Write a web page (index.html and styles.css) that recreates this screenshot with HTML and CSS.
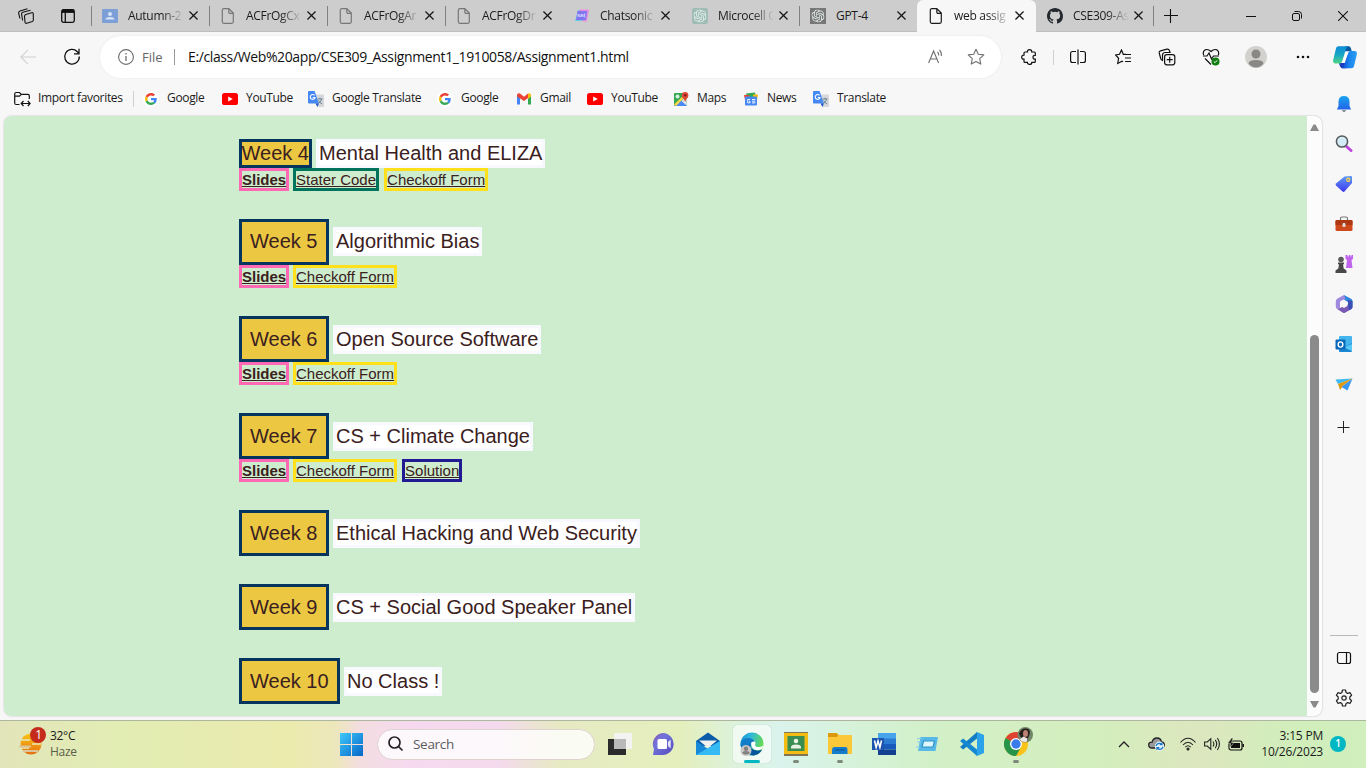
FILE: index.html
```html
<!DOCTYPE html>
<html lang="en">
<head>
<meta charset="utf-8">
<title>web assignment</title>
<link rel="stylesheet" href="styles.css">
</head>
<body>
<svg class="defs" width="0" height="0">
  <defs>
    <linearGradient id="blue" x2="1" y2="1"><stop stop-color="#3fc8fb"/><stop offset="1" stop-color="#0567c8"/></linearGradient>
    <linearGradient id="bell" x2="0" y2="1"><stop stop-color="#1aa4f0"/><stop offset="1" stop-color="#2463e6"/></linearGradient>
    <linearGradient id="tag" x2="0" y2="1"><stop stop-color="#5f9bf5"/><stop offset="1" stop-color="#4038ee"/></linearGradient>
    <linearGradient id="violet" x2="1" y2="1"><stop stop-color="#8e5bb4"/><stop offset=".35" stop-color="#7173db"/><stop offset="1" stop-color="#5449bb"/></linearGradient>
    <linearGradient id="sun" x2="0" y2="1"><stop stop-color="#f9c515"/><stop offset="1" stop-color="#e86f10"/></linearGradient>
    <linearGradient id="edge" x2="1" y2=".4"><stop stop-color="#158fd4"/><stop offset=".45" stop-color="#30b9d9"/><stop offset="1" stop-color="#67db52"/></linearGradient>
    <linearGradient id="cop1" x2="0" y2="1"><stop stop-color="#0e8bdc"/><stop offset=".5" stop-color="#19a6c4"/><stop offset="1" stop-color="#4fd684"/></linearGradient>
    <linearGradient id="cop2" x2="1" y2="0"><stop stop-color="#1546d0"/><stop offset=".5" stop-color="#1a86ee"/><stop offset="1" stop-color="#2d9df5"/></linearGradient>
  </defs>
  <symbol id="doc" viewBox="0 0 16 16"><path d="M3.800.7h5L13.300 5.100v8.700q0 1.500-1.500 1.500h-8q-1.500 0-1.500-1.500V2.200Q2.300.7 3.800.7M8.800.9v3.200q0 1.300 1.300 1.300h3" fill="none" stroke="currentColor" stroke-width="1.200"/></symbol>
  <symbol id="x" viewBox="0 0 8 8"><path d="M.4.4l7.200 7.200M7.600.4L.4 7.600" stroke="#161616" stroke-width="1.100"/></symbol>
  <symbol id="g" viewBox="0 0 48 48"><path fill="#EA4335" d="M24 9.500c3.540 0 6.710 1.220 9.210 3.600l6.850-6.850C35.900 2.380 30.470 0 24 0 14.620 0 6.510 5.380 2.560 13.220l7.980 6.190C12.430 13.720 17.740 9.500 24 9.500z"/><path fill="#4285F4" d="M46.980 24.550c0-1.570-.15-3.090-.38-4.550H24v9.020h12.940c-.58 2.960-2.260 5.480-4.780 7.180l7.730 6c4.510-4.180 7.090-10.360 7.090-17.650z"/><path fill="#FBBC05" d="M10.530 28.590c-.48-1.450-.76-2.990-.76-4.590s.27-3.140.76-4.590l-7.980-6.190C.92 16.460 0 20.120 0 24c0 3.880.92 7.540 2.560 10.780l7.970-6.190z"/><path fill="#34A853" d="M24 48c6.480 0 11.930-2.130 15.890-5.810l-7.730-6c-2.150 1.450-4.920 2.300-8.160 2.300-6.260 0-11.570-4.220-13.470-9.910l-7.980 6.190C6.510 42.620 14.620 48 24 48z"/></symbol>
  <symbol id="yt" viewBox="0 0 16 12"><rect width="16" height="12" rx="2.600" fill="#f00"/><path d="M6.200 3.400v5.200L10.800 6z" fill="#fff"/></symbol>
  <symbol id="tr" viewBox="0 0 16 16"><path d="M6 3.500h9q1 0 1 1V15q0 1-1 1H9z" fill="#d5d7da"/><path d="M9.500 8h5M12 6.800V8m1.800 0q-.8 3-4 4.800M10.500 9.500q1.500 2.500 3.700 3.500" fill="none" stroke="#5d7c8d" stroke-width=".9"/><path d="M1 0h5.600l4.200 12.500H1q-1 0-1-1V1q0-1 1-1z" fill="#4688f1"/><path d="M7.500 12.500h3.300L9.500 16z" fill="#1c56c9"/><path d="M6.500 4.400A2.400 2.400 0 1 0 7 6.500H4.800" fill="none" stroke="#fff" stroke-width="1.100"/></symbol>
  <symbol id="knot" viewBox="0 0 24 24"><path fill="#e4efec" d="M22.2819 9.8211a5.9847 5.9847 0 0 0-.5157-4.9108 6.0462 6.0462 0 0 0-6.5098-2.9A6.0651 6.0651 0 0 0 4.9807 4.1818a5.9847 5.9847 0 0 0-3.9977 2.9 6.0462 6.0462 0 0 0 .7427 7.0966 5.98 5.98 0 0 0 .511 4.9107 6.051 6.051 0 0 0 6.5146 2.9001A5.9847 5.9847 0 0 0 13.2599 24a6.0557 6.0557 0 0 0 5.7718-4.2058 5.9894 5.9894 0 0 0 3.9977-2.9001 6.0557 6.0557 0 0 0-.7475-7.0729zm-9.022 12.6081a4.4755 4.4755 0 0 1-2.8764-1.0408l.1419-.0804 4.7783-2.7582a.7948.7948 0 0 0 .3927-.6813v-6.7369l2.02 1.1686a.071.071 0 0 1 .038.052v5.5826a4.504 4.504 0 0 1-4.4945 4.4944zm-9.6607-4.1254a4.4708 4.4708 0 0 1-.5346-3.0137l.142.0852 4.783 2.7582a.7712.7712 0 0 0 .7806 0l5.8428-3.3685v2.3324a.0804.0804 0 0 1-.0332.0615L9.74 19.9502a4.4992 4.4992 0 0 1-6.1408-1.6464zM2.3408 7.8956a4.485 4.485 0 0 1 2.3655-1.9728V11.6a.7664.7664 0 0 0 .3879.6765l5.8144 3.3543-2.0201 1.1685a.0757.0757 0 0 1-.071 0l-4.8303-2.7865A4.504 4.504 0 0 1 2.3408 7.872zm16.5963 3.8558L13.1038 8.364 15.1192 7.2a.0757.0757 0 0 1 .071 0l4.8303 2.7913a4.4944 4.4944 0 0 1-.6765 8.1042v-5.6772a.79.79 0 0 0-.407-.667zm2.0107-3.0231l-.142-.0852-4.7735-2.7818a.7759.7759 0 0 0-.7854 0L9.409 9.2297V6.8974a.0662.0662 0 0 1 .0284-.0615l4.8303-2.7866a4.4992 4.4992 0 0 1 6.6802 4.66zM8.3065 12.863l-2.02-1.1638a.0804.0804 0 0 1-.038-.0567V6.0742a4.4992 4.4992 0 0 1 7.3757-3.4537l-.142.0805L8.704 5.459a.7948.7948 0 0 0-.3927.6813zm1.0976-2.3654l2.602-1.4998 2.6069 1.4998v2.9994l-2.5974 1.4997-2.6067-1.4997Z"/></symbol>
</svg>

<header class="tabs">
  <div class="tab-tools">
    <svg class="t1" width="16" height="16" viewBox="0 0 16 16" fill="#cdcdcd" stroke="#111" stroke-width="1.100"><path d="M9.500.8L2 3q-1.600.7-1.300 2.300l1.200 5.200"/><path d="M12.500 2.300L4.800 4.200q-1.500.6-1.200 2l1 6.300"/><path d="M7.700 6.600l6-1.900q1.600-.3 1.600 1.200v6q0 1.200-1 1.600l-5.500 1.800q-1.600.3-1.800-1.200l-.5-5.600q0-1.300 1.200-1.900z"/></svg>
    <svg class="t2" width="14" height="14" viewBox="0 0 14 14" fill="none" stroke="#111" stroke-width="1.300"><rect x=".7" y=".7" width="12.600" height="12.600" rx="1.800"/><path d="M1 2.300h12" stroke-width="3.200"/><path d="M4.300 3v10"/></svg>
  </div>
  <div class="tab sep"><svg class="fav"><rect width="16" height="14" y="1" rx="1" fill="#7d9fd8"/><circle cx="8" cy="6" r="2" fill="#d7e3f7"/><path d="M3.500 11.500q0-2.500 4.500-2.500t4.500 2.500z" fill="#d7e3f7"/></svg><span>Autumn-2</span><svg class="close"><use href="#x"/></svg></div>
  <div class="tab sep"><svg class="fav grey"><use href="#doc"/></svg><span>ACFrOgCx</span><svg class="close"><use href="#x"/></svg></div>
  <div class="tab sep"><svg class="fav grey"><use href="#doc"/></svg><span>ACFrOgAr</span><svg class="close"><use href="#x"/></svg></div>
  <div class="tab sep"><svg class="fav grey"><use href="#doc"/></svg><span>ACFrOgDr</span><svg class="close"><use href="#x"/></svg></div>
  <div class="tab"><svg class="fav"><path d="M4 2h10l-1.500 11H1z" fill="#68c8e8"/><path d="M5 1.500h9.500q.5 0 .4.500l-2 11.500H9" fill="#e78be1"/><path d="M3.500 3h9.700l-1.300 9H2z" fill="#8175ee"/><path d="M4 9V6l2 3V6m1 3l1-3 1 3m2.500-3H10v3h1.500M10 7.500h1" fill="none" stroke="#d9dcff" stroke-width=".8"/></svg><span>Chatsonic</span><svg class="close"><use href="#x"/></svg></div>
  <div class="tab"><svg class="fav"><rect width="16" height="16" rx="2" fill="#9fbdb5"/><use href="#knot" x="1.500" y="1.500" width="13" height="13"/></svg><span>Microcell C</span><svg class="close"><use href="#x"/></svg></div>
  <div class="tab sep plain"><svg class="fav"><rect width="16" height="16" fill="#777"/><use href="#knot" x="1.500" y="1.500" width="13" height="13"/></svg><span>GPT-4</span><svg class="close"><use href="#x"/></svg></div>
  <div class="tab active"><svg class="fav"><use href="#doc"/></svg><span>web assig</span><svg class="close"><use href="#x"/></svg></div>
  <div class="tab"><svg class="fav" viewBox="0 0 16 16"><path fill="#24292f" d="M8 0C3.580 0 0 3.580 0 8c0 3.540 2.290 6.530 5.470 7.590.4.070.55-.17.55-.38v-1.490c-2.010.37-2.530-.49-2.690-.94-.09-.23-.48-.94-.82-1.130-.28-.15-.68-.52-.01-.53.63-.01 1.080.58 1.230.82.72 1.210 1.870.87 2.330.66.07-.52.28-.87.51-1.070-1.780-.2-3.640-.89-3.640-3.950 0-.87.31-1.590.82-2.150-.08-.2-.36-1.020.08-2.120 0 0 .67-.21 2.200.82a7.400 7.400 0 0 1 4 0c1.530-1.040 2.200-.82 2.200-.82.44 1.100.16 1.920.08 2.120.51.56.82 1.270.82 2.150 0 3.070-1.870 3.750-3.650 3.950.29.25.54.73.54 1.480v2.200c0 .21.15.46.55.38A8 8 0 0 0 16 8c0-4.420-3.580-8-8-8z"/></svg><span>CSE309-As</span><svg class="close"><use href="#x"/></svg></div>
  <div class="newtab sep"><svg width="14" height="14"><path d="M6.500 0v14M0 6.500h14" stroke="#111" stroke-width="1.100"/></svg></div>
  <div class="winctl">
    <svg width="10" height="10"><path d="M0 5.500h10" stroke="#111"/></svg>
    <svg width="10" height="10" fill="none" stroke="#111"><rect x=".5" y="2.500" width="7" height="7" rx="1.500"/><path d="M2.500.5h4q3 0 3 3v4"/></svg>
    <svg width="10" height="10"><path d="M0 0l10 10M10 0L0 10" stroke="#111" stroke-width="1.100"/></svg>
  </div>
</header>

<div class="toolbar">
  <svg class="back" width="16" height="16" fill="none" stroke="#d0d0d0" stroke-width="1.100"><path d="M16 8H1M8 .8L.8 8 8 15.200"/></svg>
  <svg class="reload" width="18" height="18" fill="none" stroke="#111" stroke-width="1.300"><path d="M16.300 8.500a7.300 7.300 0 1 1-2-4.800L16 5.800M16 .8v5h-5"/></svg>
  <div class="address">
    <svg width="16" height="16" fill="none" stroke="#6d6d6d" stroke-width="1.100"><circle cx="8" cy="8" r="7.400"/><path d="M8 7v5M8 4v1.500" stroke-width="1.300"/></svg>
    <span class="scheme">File</span>
    <span class="url">E:/class/Web%20app/CSE309_Assignment1_1910058/Assignment1.html</span>
    <svg class="read" width="16" height="16" fill="none" stroke="#707070" stroke-width="1.100"><path d="M.6 14L5.600 2l5 12M2.300 10h6.600M9.500 3q1.500 1.400 1.200 3.500M11.500 1q2.400 2.400 1.800 6"/></svg>
    <svg width="18" height="18" fill="none" stroke="#707070" stroke-width="1.100"><path d="M9 1.200l2.300 5 5.500.7-4.100 3.700 1.100 5.500L9 13.400l-4.800 2.700 1.100-5.500L1.200 6.900l5.500-.7z" stroke-linejoin="round"/></svg>
  </div>
  <svg class="ext" width="16" height="16" viewBox="0 0 16 16" fill="none" stroke="#111" stroke-width="1.200"><path d="M4 3h2.500Q6 .7 8.500.7T10.700 3h2.600q1 0 1 1v2.300q-2.300-.2-2.300 1.900t2.300 2v2.200q0 1-1 1h-2.500q0 2-2.200 2t-2.200-2H4q-1 0-1-1V10.200Q.7 10.200.7 8.200T3 6.200V4q0-1 1-1z"/></svg>
  <i class="bar"></i>
  <div class="actions">
    <svg width="16" height="16" fill="none" stroke="#111" stroke-width="1.200"><path d="M6 2.500H2.500q-1.900 0-1.900 2v7q0 2 1.900 2H6M10 2.500h3.500q1.900 0 1.900 2v7q0 2-1.900 2H10M8 .5v15"/></svg>
    <svg width="16" height="16" fill="none" stroke="#111" stroke-width="1.200"><path d="M8.500 5.400h-.2L6.500 1 4.500 5.300l-4 .7 3.100 3.300-.9 5.200 4.300-2.300 1 .6M11 5.400L8.500 5.300M10 5.500h6M10 9h6M10 12.500h6"/></svg>
    <svg width="18" height="18" fill="none" stroke="#111" stroke-width="1.200"><rect x="6.600" y="6.600" width="10.200" height="10.200" rx="2.200"/><path d="M11.700 8.700v6M8.700 11.700h6M4.500 12.500Q3 12 2.700 10.500L1.200 5Q.8 3.300 2.500 2.800L9 1.200Q10.800.8 11.400 2.500L12 4.500H7q-2.400.2-2.500 2.500z"/></svg>
    <svg width="18" height="18" fill="none" stroke="#111" stroke-width="1.200"><path d="M1.700 7Q.4 3.500 3 1.900 6 .6 9 3.500 12 .6 15 1.900q2.500 1.600 1.300 5.100M1 8h4l2-3 2.500 6L11.500 8H17M3 10.500l6 6"/><circle cx="13.500" cy="13.500" r="4" fill="#107c10" stroke="none"/><path d="M11.800 13.500l1.200 1.200 2.200-2.300" stroke="#fff" stroke-width="1"/></svg>
    <svg width="22" height="22"><circle cx="11" cy="11" r="11" fill="#d3d1ce"/><circle cx="11" cy="8" r="4.500" fill="#8a8886"/><path d="M3.500 17.500q0-3.500 7.500-3.500t7.500 3.500Q15.500 21.500 11 21.500T3.500 17.500z" fill="#8a8886"/></svg>
    <svg width="14" height="4" fill="#111"><circle cx="2" cy="2" r="1.300"/><circle cx="7" cy="2" r="1.300"/><circle cx="12" cy="2" r="1.300"/></svg>
    <svg width="24" height="23"><path d="M12 .2h4q2 .5 2.600 5H12z" fill="#075a9e"/><path d="M6 17h6q0 5.300 2 5.300H9Q7 22 6 17z" fill="#173ec0"/><path id="fold" d="M5.500.2h9.500q-1.500.8-2.300 3.500L9.300 15q-.8 2.500-3 2.500H2Q-.5 17 .2 14L2.700 3.500Q3.300.2 5.500.2z" fill="url(#cop1)"/><path d="M18.500 22.300H9q1.500-.8 2.300-3.500L14.700 7.500q.8-2.500 3-2.500H22q2.500.5 1.800 3.500L21.300 19q-.6 3.300-2.800 3.300z" fill="url(#cop2)"/><path d="M13.300 6.500h2.200L11 16.500H9z" fill="#fff"/></svg>
  </div>
</div>

<nav class="bookmarks">
  <svg width="17" height="16" fill="none" stroke="#111" stroke-width="1.200"><path d="M5.500 13.500H2.200q-1.500 0-1.500-1.500V3Q.7 1.500 2.200 1.500h3.300L7.300 3.300h6.500q1.500 0 1.500 1.500V8M1 5.200h4.500l1.800-1.900M7.500 12.500H16M9.500 10l-2.300 2.500L9.500 15M13.800 10l2.300 2.500-2.300 2.500"/></svg><span class="w-import">Import favorites</span><i></i>
  <svg class="g"><use href="#g" x="2" y="2" width="12" height="12"/></svg><span class="w1">Google</span>
  <svg><use href="#yt" y="2" width="16" height="12"/></svg><span class="w2">YouTube</span>
  <svg><use href="#tr"/></svg><span class="w3">Google Translate</span>
  <svg class="g"><use href="#g" x="2" y="2" width="12" height="12"/></svg><span class="w4">Google</span>
  <svg viewBox="0 0 16 16"><path d="M1 3.500v10h3V6z" fill="#4285f4"/><path d="M15 3.500v10h-3V6z" fill="#34a853"/><path d="M12 6.500v-4q2.500-1 3 1.500v1.500l-3 2.500z" fill="#fbbc04"/><path d="M1 5.500V4q.5-2.500 3-1.500l4 3.200 4-3.200v4.500L8 10z" fill="#ea4335"/></svg><span class="w5">Gmail</span>
  <svg><use href="#yt" y="2" width="16" height="12"/></svg><span class="w6">YouTube</span>
  <svg viewBox="0 0 16 16"><rect x="1" y="2" width="13" height="13" rx="1" fill="#35a853"/><path d="M3 15L13.800 5v9q0 1-1 1z" fill="#dfe3e8"/><path d="M7.700 9.300L14 15H3z" fill="#4a89f3"/><path d="M1 13.500L10 5l1.500 1.500L3 15z" fill="#fbd64b"/><circle cx="4.500" cy="5.500" r="2" fill="#d9f2df"/><path d="M12 1a3.400 3.400 0 0 1 3.400 3.400q0 2-2 3.600l-1.200 3-1.300-3q-2.200-1.600-2.200-3.600Q9 1 12 1z" fill="#df4535"/><circle cx="12.200" cy="4.300" r="1.200" fill="#7d211a"/></svg><span class="w7">Maps</span>
  <svg viewBox="0 0 16 16"><path d="M3 2.500l9-1 1 5H4z" fill="#34a853"/><path d="M1 4h5l-1 5H2z" fill="#ea4335"/><path d="M10 3.500h5L14 9h-4z" fill="#fbbc04"/><rect x="2" y="5.500" width="12" height="9" rx="1" fill="#4688f1"/><path d="M7 8.500H4.700v3.300H7v-1.600H6M9 8.500h3.300M9 10.200h3.300M9 11.900h3.300" fill="none" stroke="#fff" stroke-width=".9"/></svg><span class="w8">News</span>
  <svg><use href="#tr"/></svg><span>Translate</span>
</nav>

<main class="middle">
  <div class="view">
    <div class="page">
      <section class="week first"><div class="head"><b>Week 4</b><em>Mental Health and ELIZA</em></div><div class="links"><a class="slides">Slides</a><a class="code">Stater Code</a><a class="form wide">Checkoff Form</a></div></section>
      <section class="week five"><div class="head"><b>Week 5</b><em>Algorithmic Bias</em></div><div class="links"><a class="slides">Slides</a><a class="form">Checkoff Form</a></div></section>
      <section class="week"><div class="head"><b>Week 6</b><em>Open Source Software</em></div><div class="links"><a class="slides">Slides</a><a class="form">Checkoff Form</a></div></section>
      <section class="week"><div class="head"><b>Week 7</b><em>CS + Climate Change</em></div><div class="links"><a class="slides">Slides</a><a class="form">Checkoff Form</a><a class="solution">Solution</a></div></section>
      <section class="week"><div class="head"><b>Week 8</b><em>Ethical Hacking and Web Security</em></div></section>
      <section class="week"><div class="head"><b>Week 9</b><em>CS + Social Good Speaker Panel</em></div></section>
      <section class="week ten"><div class="head"><b>Week 10</b><em>No Class !</em></div></section>
    </div>
    <div class="scroll">
      <svg width="9" height="7"><path d="M0 7L3.500.6h2L9 7z" fill="#8b8b8b"/></svg>
      <div class="thumb"></div>
      <svg width="9" height="7"><path d="M0 0L3.500 6.400h2L9 0z" fill="#8b8b8b"/></svg>
    </div>
  </div>
  <aside class="side">
    <svg viewBox="0 0 18 18"><path d="M7 15h4l-1 2H8z" fill="#8a8f98"/><path d="M9 1q5 0 5.500 5v5l1.600 3.500H1.900L3.500 11V6Q4 1 9 1z" fill="url(#bell)"/></svg>
    <svg viewBox="0 0 18 18"><path d="M11.500 11.500l4.500 4" stroke="#bd45de" stroke-width="3" stroke-linecap="round"/><circle cx="7" cy="6.500" r="5.600" fill="#d3ebf7" stroke="#55585b" stroke-width="1.500"/></svg>
    <svg viewBox="0 0 18 18"><path d="M9.500 1.500l6.500-.5q1 0 1 1v6l-7.500 8.500q-1 .8-2 0L1 10.500q-.8-1 0-2z" fill="url(#tag)"/><circle cx="13.300" cy="4.700" r="1.600" fill="#7d8fd0" stroke="#f7d44d" stroke-width="1.200"/></svg>
    <svg viewBox="0 0 18 18"><path d="M5.500 5V3.500q0-1.500 1.500-1.500h4q1.500 0 1.500 1.500V5" fill="none" stroke="#777" stroke-width="1.200"/><rect x=".5" y="5" width="17" height="11" rx="1.500" fill="#cf491d"/><path d="M.5 10V6q0-1 1-1h15q1 0 1 1v4z" fill="#ad3613"/><rect x="7.500" y="8" width="3" height="4" rx="1" fill="#ddd"/></svg>
    <svg viewBox="0 0 18 18"><path d="M10.500 0h2v1.500h1.300V0h1.600v1.500h1V0H18v4l-1.500 1 1 8h-6.500L12 5l-1.500-1z" fill="#c063ee"/><circle cx="6" cy="4.500" r="2.800" fill="#5a5a5a"/><path d="M3 7.500h6v1.700H8l.7 4.300 2.800 2V18H.5v-2.500L3.300 13.500 4 9.200H3z" fill="#484848"/></svg>
    <svg viewBox="0 0 18 18"><path d="M9 0l7.500 4q1 .8 1 2v5L13 9.500V7.200L9 4.500z" fill="#2f86de"/><path d="M9 0L2.500 3.500Q.8 4.500.8 6.500v5q0 2 1.700 2.800L5 13V7.500Q5 6 6.500 5.500L10.500 4z" fill="#9f8ade"/><path d="M2.500 14.300L9 11l4-1.500 4.500 1.500v1q0 1.500-1.500 2.300l-6 3.400q-1 .5-2 0z" fill="#7a58b5"/><path d="M13 9.500V5l4.500 1v5.500q0 2-1.500 2.800l-2 1z" fill="#3a4fb5"/><path d="M9 5.200l3.400 2v3.800L9 13l-3.400-2V7.200z" fill="#f7f7f7"/></svg>
    <svg viewBox="0 0 18 18"><rect x="4" y="1" width="13" height="11" rx="1" fill="#45b6ed"/><path d="M4 8l6 4 7-4v8q0 1-1 1H5q-1 0-1-1z" fill="#1a86d3"/><path d="M17 9v7L9 12.500z" fill="#59c9f5"/><rect x=".5" y="4.500" width="10" height="10" rx="1" fill="#0869bb"/><ellipse cx="5.500" cy="9.500" rx="2.300" ry="2.600" fill="none" stroke="#fff" stroke-width="1.400"/></svg>
    <svg viewBox="0 0 18 18"><path d="M.5 4.500L17.500 3.500 3 9z" fill="#3ebaf3"/><path d="M3 9l14.500-5.500L9 10l-4 5z" fill="#e09a12"/><path d="M17.500 3.500L12.500 15.500 6.500 12z" fill="#3a96f2"/></svg>
    <svg class="plus" viewBox="0 0 18 18"><path d="M8.500 3v12M2.500 9.500h12" stroke="#222"/></svg>
    <i></i>
    <svg class="panel" viewBox="0 0 18 18" fill="none" stroke="#111" stroke-width="1.200"><rect x="2.500" y="3.500" width="13" height="11" rx="2"/><path d="M11.500 3.500v11"/></svg>
    <svg viewBox="0 0 18 18" fill="none" stroke="#222" stroke-width="1.200"><path d="M7.500 1h3l.6 2.500 1.500.9 2.500-.7 1.500 2.600L14.800 8v2l1.800 1.700-1.500 2.600-2.500-.7-1.500.9-.6 2.500h-3l-.6-2.500-1.500-.9-2.500.7-1.500-2.600L3.200 10V8L1.400 6.300l1.500-2.600 2.500.7 1.500-.9z" stroke-linejoin="round"/><circle cx="9" cy="9" r="2.200"/></svg>
  </aside>
</main>

<footer class="taskbar">
  <div class="weather"><svg width="28" height="30"><circle cx="12" cy="17" r="10.500" fill="url(#sun)"/><path d="M2 13h9M13 17h9M2 21h8" stroke="#e6e9b6" stroke-width="1.300"/><path d="M0 19.500h12M4 24h15" stroke="#d9c79b" stroke-width="1.800"/><circle cx="19" cy="8" r="8" fill="#c42b1c"/><text x="16.300" y="12" class="num">1</text></svg><p>32°C<br><span>Haze</span></p></div>
  <svg class="start" width="23" height="23" fill="url(#blue)"><path d="M0 0h11v11H0zM12 0h11v11H12zM0 12h11v11H0zM12 12h11v11H12z"/></svg>
  <div class="search"><svg width="16" height="16" fill="none" stroke="#222" stroke-width="1.700"><circle cx="6.500" cy="6.500" r="5.500"/><path d="M10.500 10.500l4 4"/></svg><span>Search</span></div>
  <div class="apps">
    <div><svg viewBox="0 0 24 24"><path d="M0 7h18v16H0z" fill="#2b2b2b"/><path d="M6 1h18v16H6z" fill="#f3f3f1"/><path d="M6 7h12v10H6z" fill="#b9b9b9"/></svg></div>
    <div><svg viewBox="0 0 24 24"><path d="M12 1a11 11 0 1 1-3 22H1l1-6A11 11 0 0 1 12 1z" fill="url(#violet)"/><rect x="5.500" y="7" width="9.500" height="10" rx="1.500" fill="#fff"/><path d="M16 10l2.700-2.500v9L16 14z" fill="#e6e3ff"/></svg></div>
    <div><svg viewBox="0 0 24 24"><path d="M0 9l12-8.500L24 9v5H0z" fill="#0a5ca8"/><path d="M3 8.500h18L12 16z" fill="#f1f1ef"/><path d="M0 9l12 8 12-8v14H0z" fill="#1689d8"/><path d="M0 23L24 9v14z" fill="#35baf3"/></svg></div>
    <div class="edge"><svg viewBox="0 0 24 24"><circle cx="12" cy="12" r="11.500" fill="url(#edge)"/><path d="M.5 13Q1 6 8 6q6 0 7 5-5 0-4.500 5t6 6.500Q7 25 2 18z" fill="#137cc9"/><path d="M10 12q0 8 12 6-3 5-9 5.500-5-1-5-6.500 0-3 2-5z" fill="#07559d"/><path d="M11 11q1-2 4-1.500 1 2 0 3 0 3 5 2.500 3-.5 3.500-2 0 4-4 5-8 1.500-8.500-7z" fill="#fff"/><circle cx="6" cy="18.500" r="5.500" fill="#cac9c8"/><circle cx="6" cy="16.800" r="2.200" fill="#828180"/><path d="M2 21q1-2 4-2t4 2q-4 3-8 0z" fill="#828180"/></svg><s class="on"></s></div>
    <div><svg viewBox="0 0 24 24"><path d="M0 0h24v24H0z" fill="#7d7651"/><path d="M0 1h24v21H0z" fill="#f4bd15"/><path d="M3.500 4h17v15h-17z" fill="#3b8d51"/><circle cx="12" cy="9" r="2.300" fill="#e9f2e3"/><path d="M7 16.500v-2q1-2 5-2t5 2v2z" fill="#e9f2e3"/></svg><s></s></div>
    <div><svg viewBox="0 0 24 24"><path d="M0 2q0-1 1-1h8l2 2h12q1 0 1 1v17q0 1-1 1H1q-1 0-1-1z" fill="#fbc83a"/><path d="M0 2q0-1 1-1h7q1 0 2 2L9 5H0z" fill="#dc980d"/><path d="M4 22v-4q0-3 2.500-3h11q2 0 2 3v4z" fill="#167dcb"/><path d="M7 18h10" stroke="#095c9e" stroke-width="1.300"/></svg><s></s></div>
    <div><svg viewBox="0 0 24 24"><path d="M6 1h18v6H6z" fill="#46a3ec"/><path d="M6 6.500h18V12H6z" fill="#2b7bd3"/><path d="M6 12h18v5.500H6z" fill="#195abd"/><path d="M6 17.500h18V23H6z" fill="#133f91"/><path d="M0 6h12v12H0z" fill="#1d55ae"/><path d="M2.500 8.500l1.600 7L6 9l1.900 6.500 1.600-7" fill="none" stroke="#fff" stroke-width="1.500"/></svg></div>
    <div><svg viewBox="0 0 24 24"><path d="M4.500 5H22l-2.500 14H2z" fill="#58b9e7"/><path d="M7.500 9h11l-1.500 6H6z" fill="#dff6ff" stroke="#2b93cd" stroke-width="1.200"/><path d="M1 6.500h5M1 10h4M0 15h4" stroke="#82cdee"/></svg></div>
    <div><svg viewBox="0 0 24 24"><path d="M17 0l7 3v18l-7 3z" fill="#2ba3ea"/><path d="M17 0v6.500L3.200 17.500 0 15z" fill="#137cc2"/><path d="M17 24v-6.500L3.200 6.500 0 9z" fill="#1688d1"/></svg></div>
    <div class="chrome"><svg viewBox="0 0 32 29"><circle cx="12" cy="17" r="12" fill="#fbc318"/><path d="M12 17L1.600 11A12 12 0 0 1 22.400 11z" fill="#df4334"/><path d="M12 17L1.600 11A12 12 0 0 0 12 29l5-9z" fill="#26954a"/><circle cx="12" cy="17" r="6" fill="#fff"/><circle cx="12" cy="17" r="4.700" fill="#397ce9"/><circle cx="21.300" cy="7.800" r="7.700" fill="#72866a"/><path d="M15 7q2-6 7-5.500 5 0 3.500 6l-2.500 6-6-3z" fill="#271e1c"/><ellipse cx="21.500" cy="6.500" rx="2.500" ry="3.500" fill="#bc8273"/><path d="M15.500 12.500l4-3 4 2-1 3.500q-4 .5-7-2.500z" fill="#ece7e4"/></svg><s></s></div>
  </div>
  <div class="tray">
    <svg width="12" height="7" fill="none" stroke="#222" stroke-width="1.300"><path d="M1 6l5-5 5 5"/></svg>
    <svg class="cloud" width="18" height="14"><path d="M4 11Q.7 11 .7 8T4 5.200Q5 1 9 1t4.300 4q3 .3 3 3T13 11z" fill="#999" stroke="#222" stroke-width="1.300"/><circle cx="11.500" cy="9.200" r="4.700" fill="#e7f3fb"/><path d="M8 9q1-3 4-2.600l2 1.300m0-2.300v2.300h-2.300M15 9.700q-1 3-4 2.600L9 10.700m0 2.300v-2.300h2.300" fill="none" stroke="#1878c9" stroke-width="1.200"/></svg>
    <svg class="wifi" width="16" height="14" fill="none" stroke="#222" stroke-width="1.100"><path d="M.5 5.500q7.500-8.500 15 0M3 8q5-5.500 10 0M5.300 10.200q2.700-3 5.400 0"/><circle cx="8" cy="12" r="1" fill="#222"/></svg>
    <svg class="vol" width="16" height="14" fill="none" stroke="#222" stroke-width="1.100"><path d="M.6 5v4h2.700l3.500 3.300V1.700L3.300 5zM9 4.500q1.800 2.500 0 5M11.200 2.800q3 4 0 8.400M13.400 1q4 6 0 12"/></svg>
    <svg class="bat" width="16" height="13"><rect x="1" y="3" width="13" height="9" rx="2" fill="none" stroke="#111" stroke-width="1.200"/><path d="M3 5h9v5H3z" fill="#111"/><path d="M15.200 6v3" stroke="#111" stroke-width="1.500"/><path d="M3.500 0L0 5.500h2.500L2 9.500l4-5H3.500L5 0z" fill="#111" stroke="#d8ecc0" stroke-width=".5"/></svg>
    <p>3:15 PM<br>10/26/2023</p>
    <strong>1</strong>
  </div>
</footer>
</body>
</html>
```

FILE: styles.css
```css
* { box-sizing: border-box; }
body { margin: 0; width: 1366px; height: 768px; overflow: hidden; display: flex; flex-direction: column; background: #f7f7f7; color: #1b1b1b; font: 12px/16px "Open Sans", "Noto Sans", sans-serif; letter-spacing: -0.2px; }
svg { flex: none; display: block; }
p { margin: 0; }
.defs { height: 0; }

.tabs { display: flex; height: 32px; background: #cdcdcd; flex: none; align-items: center; border-bottom: 1px solid #bebebe; }
.tab-tools { width: 91px; display: flex; align-items: center; padding-left: 18px; gap: 27px; }
.tab { width: 118px; height: 32px; display: flex; align-items: center; padding-left: 11px; flex: none; }
.sep { background: linear-gradient(#808080, #808080) 0 6px / 1px 20px no-repeat; }
.fav { width: 16px; height: 16px; }
.grey { color: #777; }
.tab span { width: 58px; margin: 0 3px 0 10px; letter-spacing: -0.3px; white-space: nowrap; -webkit-mask: linear-gradient(90deg, #000 34px, transparent 56px); mask: linear-gradient(90deg, #000 34px, transparent 56px); }
.tab.plain span { -webkit-mask: none; mask: none; }
.close { width: 9px; height: 9px; }
.active { width: 119px; background: #f7f7f7; border-radius: 6px 6px 0 0; }
.newtab { height: 32px; width: 60px; display: flex; align-items: center; padding-left: 11px; margin-left: -1px; }
.winctl { margin-left: auto; display: flex; gap: 36px; padding-right: 18px; }

.toolbar { display: flex; height: 50px; align-items: center; flex: none; }
.back { margin-left: 20px; }
.reload { margin-left: 27px; }
.address { margin: 0 0 0 19px; width: 901px; height: 42px; border-radius: 21px; background: #fff; box-shadow: 0 0 3px #0001; display: flex; align-items: center; padding: 0 16px 0 18px; }
.scheme { font-size: 13px; letter-spacing: 0; color: #666; margin-left: 8px; width: 33px; border-right: 1px solid #999; }
.url { font-size: 14px; margin-left: 13px; color: #111; letter-spacing: -0.38px; flex: 1; white-space: nowrap; }
.read { margin-right: 23px; }
.ext { margin-left: 20px; }
.bar { width: 1px; height: 15px; background: #d0d0d0; margin-left: 16px; }
.actions { display: grid; grid-template-columns: 47px 43px 45px 43px 48px 45px 40px; justify-items: center; align-items: center; }

.bookmarks { display: flex; height: 33px; align-items: center; padding-left: 14px; flex: none; white-space: nowrap; letter-spacing: -0.33px; }
.bookmarks svg { width: 16px; height: 16px; margin-right: 8px; }
.bookmarks span { margin-top: -1px; }
.bookmarks svg:first-child { width: 17px; margin-right: 7px; }
.bookmarks .g { background: #fff; border-radius: 8px; }
.bookmarks i { width: 1px; height: 16px; background: #d0d0d0; margin-right: 9px; }
.w-import { width: 95px; }
.w1 { width: 55px; } .w2 { width: 62px; } .w3 { width: 105px; } .w4 { width: 55px; }
.w5 { width: 47px; } .w6 { width: 62px; } .w7 { width: 46px; } .w8 { width: 46px; }

.middle { display: flex; flex: 1; min-height: 0; }
.view { width: 1318px; height: 600px; margin: 1px 0 0 4px; display: flex; border-radius: 8px; overflow: hidden; background: #fcfcfc; box-shadow: 0 0 2px #0004; }
.page { width: 1303px; background: #ceedce; padding: 23px 0 0 235px; display: flex; flex-direction: column; gap: 28px; font-family: "Liberation Sans", Arial, sans-serif; letter-spacing: 0; color: #3a2020; white-space: nowrap; }
.head { display: flex; gap: 4px; align-items: flex-start; font-size: 20px; line-height: 23px; }
.head b { font-weight: 400; width: 90px; height: 46px; padding: 9px 8px 8px; border: 3px solid #03355f; background: #ecc742; }
.head em { font-style: normal; height: 29px; margin-top: 9px; border: 3px solid #f7f9ff; background: #fff; }
.first b { padding: 0; width: 73px; height: 29px; text-indent: -0.5px; }
.first em { margin: 0; }
.five b { padding-top: 8px; }
.five em { margin-top: 8px; }
.ten b { width: 101px; }
.links { display: flex; gap: 4px; font-size: 15px; line-height: 17px; }
.links a { height: 23px; border: 3px solid #ffe01b; text-decoration: underline; }
.links .slides { font-weight: 700; border-color: #ff69b4; width: 50px; }
.links .code { border-color: #00735c; }
.links .form.wide { margin-left: 1px; }
.links .solution { border-color: #211a93; margin-left: 1px; }

.scroll { width: 15px; display: flex; flex-direction: column; align-items: center; padding: 8px 0; }
.thumb { width: 9px; height: 358px; border-radius: 5px; background: #8b8b8b; margin: 204px 0 8px; flex: none; }
.side { width: 44px; display: flex; flex-direction: column; align-items: center; }
.side svg { width: 18px; height: 18px; margin-bottom: 22px; }
.side svg:first-child { margin-top: -20px; }
.side .plus { margin: 3px 0 0; }
.side i { width: 28px; height: 1px; flex: none; background: #b9b9b9; margin-top: 199px; }
.side .panel { margin-top: 13px; }

.taskbar { height: 48px; flex: none; border-top: 1px solid #adb69f; padding-bottom: 1px; display: flex; align-items: center; background: linear-gradient(90deg, #e2e5ba 0, #e2edb3 120px, #e6ebb0 210px, #ecebae 290px, #ece7bb 335px, #f3dde0 360px, #f6d9ef 410px, #f4daec 500px, #e6eac2 560px, #e5efbd 680px, #dcf2db 735px, #daf3ec 780px, #d6f2da 850px, #d2f0c8 930px, #d4eebd 1100px, #dde7bf 1200px, #d1eebb 1290px, #d0efbc); }
.weather { display: flex; width: 340px; padding-left: 19px; align-items: center; gap: 3px; }
.weather svg { margin-top: -4px; }
.weather p { letter-spacing: -0.3px; }
.weather span { color: #5b604a; }
.num { fill: #fff; font-size: 12px; }
.start { margin-right: 14px; }
.search { width: 218px; height: 31px; border-radius: 16px; border: 1px solid #dfd3cf; background: #fffc; display: flex; align-items: center; padding-left: 10px; gap: 9px; font-size: 13.5px; letter-spacing: -0.3px; color: #5c5c5c; }
.apps { display: flex; gap: 6px; margin-left: 6px; }
.apps div { width: 38px; height: 38px; display: flex; flex-direction: column; align-items: center; padding-top: 7px; border-radius: 5px; flex: none; }
.apps svg { width: 24px; height: 24px; }
.apps s { width: 6px; height: 3px; border-radius: 2px; background: #7c8b79; margin-top: 4px; }
.apps .edge { background: #ffffff99; box-shadow: 0 0 1px #0004; }
.apps .on { width: 16px; background: #00b7c3; }
.apps .chrome { padding-top: 2px; }
.apps .chrome svg { width: 32px; height: 29px; margin-left: 8px; }
.tray { margin-left: auto; display: flex; align-items: center; padding-right: 20px; }
.tray p { text-align: right; width: 74px; letter-spacing: -0.2px; }
.cloud { margin-left: 18px; } .wifi { margin-left: 14px; } .vol { margin-left: 8px; } .bat { margin-left: 8px; margin-right: 5px; }
.tray strong { width: 16px; height: 16px; border-radius: 8px; background: #00b7c3; color: #fff; font-size: 10px; font-weight: 600; text-align: center; line-height: 15px; margin-left: 7px; }
```
